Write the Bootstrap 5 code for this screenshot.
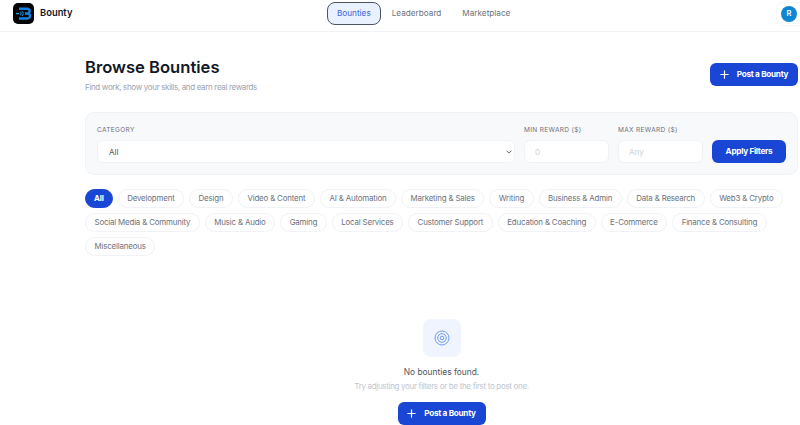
<!DOCTYPE html>
<html lang="en">
<head>
    <meta charset="UTF-8">
    <title>Bounty</title>
    <meta name="viewport" content="width=device-width, initial-scale=1">
    <link href="https://cdn.jsdelivr.net/npm/bootstrap@5.3.3/dist/css/bootstrap.min.css" rel="stylesheet">
    <style>
        html, body { height: 425px; overflow: hidden; }
        body { font-family: Inter, "Liberation Sans", sans-serif; background: #fff; color: #111827; }
        .topbar { height: 32px; border-bottom: 1px solid #f1f3f6; padding: 0 0 5px 13px; }
        .brand-wrap { gap: 6px; }
        .brand { font-size: 9.4px; font-weight: 600; color: #111827; }
        .logo { width: 21px; height: 21px; }
        .nav-wrap { left: 327px; top: 2px; }
        .nav-tab { font-size: 8.2px; color: #6b7280; padding: 0 9px; height: 23px; line-height: 21px; border: 1px solid transparent; border-radius: 8px; }
        .nav-tab + .nav-tab { margin-left: 1px; }
        .nav-tab.active { color: #3b64d8; background: #eaf1fe; border-color: #4b5563; }
        .user-box { width: 24px; height: 24px; margin-top: 2px; border: 1px solid #f5f6f8; border-right: 0; border-radius: 7px 0 0 7px; padding-left: 4px; }
        .avatar { width: 16px; height: 16px; background: #0f86d1; color: #fff; font-size: 7.5px; font-weight: 600; }
        .page { padding: 0 2px 0 85px; }
        .head { padding-top: 24px; height: 80px; }
        .head .btn-post { margin-top: 7px; }
        .title { font-size: 16.6px; font-weight: 600; margin: 0; color: #111827; line-height: 22px; }
        .subtitle { font-size: 8px; letter-spacing: -.34px; color: #9ca3af; margin: 3.5px 0 0; line-height: 11px; }
        .btn-bounty { background: #1a46d6; color: #fff; font-size: 8.2px; font-weight: 700; border: 0; border-radius: 6px; height: 23px; padding: 0; letter-spacing: -.3px; }
        .btn-bounty:hover { background: #1a46d6; color: #fff; }
        .btn-post { width: 88px; }
        .filters { height: 63px; background: #f8f9fb; border: 1px solid #f0f2f5; border-radius: 9px; padding: 0 12px 11px 11px; gap: 9px; }
        .filters > * { flex-shrink: 0; }
        .filters label { font-size: 6.5px; font-weight: 400; letter-spacing: .35px; color: #6b7280; display: block; line-height: 9px; margin-bottom: 5px; }
        .filters .form-select, .filters .form-control { font-size: 8px; height: 23px; min-height: 0; border: 1px solid #f0f2f5; border-radius: 6px; color: #4b5563; box-shadow: none; }
        .filters .form-select { padding: 0 11px; background-size: 6px 6px; background-position: right 2px center; }
        .filters .form-control { padding: 0 10px; }
        .filters .form-control::placeholder { color: #cbd2dc; }
        .col-cat { width: 418px; }
        .col-num { width: 85px; }
        .btn-apply { width: 74px; }
        .chips { gap: 5px; margin-top: 14px; }
        .chip { font-size: 7.9px; letter-spacing: -.17px; height: 19px; line-height: 17px; padding: 0 8.5px; border: 1px solid #f0f2f5; border-radius: 10px; color: #6b7280; background: #fff; white-space: nowrap; }
        .chip.active { background: #1a46d6; border-color: #1a46d6; color: #fff; font-weight: 700; padding: 0 8px; }
        .empty { margin-top: 63px; }
        .empty-icon { width: 38px; height: 38px; background: #eff4fe; border-radius: 8px; }
        .empty-title { font-size: 8.4px; color: #4b5563; margin: 9px 0 0; line-height: 12px; }
        .empty-text { font-size: 8px; letter-spacing: -.32px; color: #c0c6d0; margin: 2px 0 0; line-height: 12px; }
        .empty .btn-post { margin-top: 10px; }
    </style>
</head>
<body>
<!-- Barra superior -->
<header class="topbar d-flex align-items-center position-relative">
    <div class="brand-wrap d-flex align-items-center">
        <svg class="logo" viewBox="0 0 21 21">
            <defs>
                <linearGradient id="logoBlue" x1="0" y1="0" x2="1" y2="1">
                    <stop offset="0" stop-color="#1fb2f0"/>
                    <stop offset="1" stop-color="#1063e0"/>
                </linearGradient>
            </defs>
            <rect width="21" height="21" rx="5" fill="#050505"/>
            <path d="M6 5.700h8.200a2.400 2.400 0 0 1 0 4.800h-2.200M12 10.500h2.500a2.500 2.500 0 0 1 0 5H6" fill="none" stroke="#1583e6" stroke-width="2.400"/>
            <path d="M3 9.900h3v1.300H3z" fill="#22a7ee"/>
            <path d="M7 8.800a2 2 0 0 1 0 3.500M9 8.200a3 3 0 0 1 0 4.700" fill="none" stroke="#22a7ee" stroke-width="1"/>
        </svg>
        <span class="brand">Bounty</span>
    </div>
    <nav class="position-absolute d-flex align-items-center nav-wrap">
        <span class="nav-tab active">Bounties</span>
        <span class="nav-tab">Leaderboard</span>
        <span class="nav-tab">Marketplace</span>
    </nav>
    <div class="user-box d-flex align-items-center ms-auto">
        <div class="avatar rounded-circle d-flex align-items-center justify-content-center">R</div>
    </div>
</header>

<main class="page">
    <div class="d-flex justify-content-between align-items-start head">
        <div>
            <h1 class="title">Browse Bounties</h1>
            <p class="subtitle">Find work, show your skills, and earn real rewards</p>
        </div>
        <button class="btn btn-bounty btn-post d-flex align-items-center justify-content-center gap-2" type="button">
            <svg width="9" height="9" viewBox="0 0 9 9"><path d="M4.500 .8v7.400M.8 4.500h7.400" stroke="#fff" stroke-width="1.200" stroke-linecap="round"/></svg>
            Post a Bounty
        </button>
    </div>

    <!-- Filtros -->
    <form class="filters d-flex align-items-end">
        <div class="col-cat">
            <label for="cat">CATEGORY</label>
            <select id="cat" class="form-select"><option>All</option></select>
        </div>
        <div class="col-num">
            <label for="min">MIN REWARD ($)</label>
            <input id="min" type="text" class="form-control" placeholder="0">
        </div>
        <div class="col-num">
            <label for="max">MAX REWARD ($)</label>
            <input id="max" type="text" class="form-control" placeholder="Any">
        </div>
        <button class="btn btn-bounty btn-apply" type="button">Apply Filters</button>
    </form>

    <div class="chips d-flex flex-wrap" id="chips"></div>

    <!-- Sin resultados -->
    <section class="empty d-flex flex-column align-items-center">
        <div class="empty-icon d-flex align-items-center justify-content-center">
            <svg width="16" height="16" viewBox="0 0 16 16" fill="none" stroke="#6f9bf0" stroke-width="1">
                <circle cx="8" cy="8" r="7"/><circle cx="8" cy="8" r="4.300"/><circle cx="8" cy="8" r="1.800"/>
            </svg>
        </div>
        <p class="empty-title">No bounties found.</p>
        <p class="empty-text">Try adjusting your filters or be the first to post one.</p>
        <button class="btn btn-bounty btn-post d-flex align-items-center justify-content-center gap-2" type="button">
            <svg width="9" height="9" viewBox="0 0 9 9"><path d="M4.500 .8v7.400M.8 4.500h7.400" stroke="#fff" stroke-width="1.200" stroke-linecap="round"/></svg>
            Post a Bounty
        </button>
    </section>
</main>

<script>
    const categorias = ['All', 'Development', 'Design', 'Video & Content', 'AI & Automation', 'Marketing & Sales', 'Writing', 'Business & Admin', 'Data & Research', 'Web3 & Crypto', 'Social Media & Community', 'Music & Audio', 'Gaming', 'Local Services', 'Customer Support', 'Education & Coaching', 'E-Commerce', 'Finance & Consulting', 'Miscellaneous'];
    const chips = document.getElementById('chips');
    categorias.forEach((c, i) => {
        const s = document.createElement('span');
        s.className = 'chip' + (i === 0 ? ' active' : '');
        s.textContent = c;
        chips.appendChild(s);
    });
</script>
</body>
</html>
